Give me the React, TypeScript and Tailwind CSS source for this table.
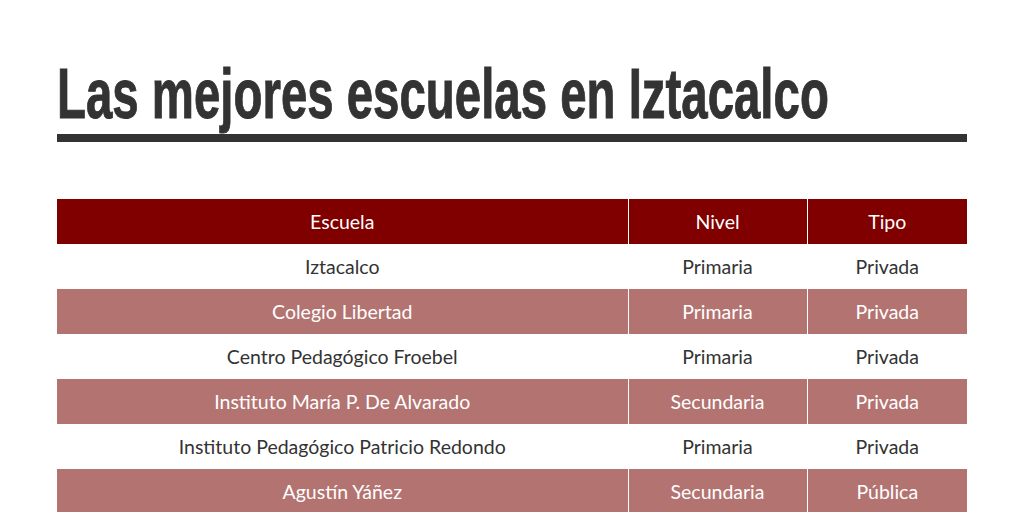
const rows = [
  { escuela: "Iztacalco", nivel: "Primaria", tipo: "Privada" },
  { escuela: "Colegio Libertad", nivel: "Primaria", tipo: "Privada" },
  { escuela: "Centro Pedagógico Froebel", nivel: "Primaria", tipo: "Privada" },
  { escuela: "Instituto María P. De Alvarado", nivel: "Secundaria", tipo: "Privada" },
  { escuela: "Instituto Pedagógico Patricio Redondo", nivel: "Primaria", tipo: "Privada" },
  { escuela: "Agustín Yáñez", nivel: "Secundaria", tipo: "Pública" },
]

export default function App() {
  return (
    <div className="w-[1024px] h-[512px] overflow-hidden bg-white px-[57px] pt-[54px]">
      {/* narrow bold title: no condensed face installed, so squeeze a regular one */}
      <h1
        className="text-[70px] leading-[80px] font-bold text-[#333333] whitespace-nowrap border-b-[8px] border-[#333333]"
        style={{ fontFamily: '"Liberation Sans", Arial, sans-serif' }}
      >
        <span className="inline-block origin-left scale-x-[0.677] [-webkit-text-stroke:1px_#333333]">
          Las mejores escuelas en Iztacalco
        </span>
      </h1>

      <table
        className="mt-[57px] w-[910px] border-collapse text-[19.5px]"
        style={{ fontFamily: 'Lato, "Noto Sans", sans-serif' }}
      >
        <thead>
          <tr className="bg-[#800000] text-white h-[45px]">
            <th className="w-[571px] font-normal text-center border-r border-white">Escuela</th>
            <th className="w-[179px] font-normal text-center border-r border-white">Nivel</th>
            <th className="font-normal text-center">Tipo</th>
          </tr>
        </thead>
        <tbody>
          {rows.map((r, i) => {
            const odd = i % 2 === 1
            return (
              <tr
                key={i}
                className={odd ? "bg-[#b37471] text-white h-[45px]" : "bg-white text-[#333333] h-[45px]"}
              >
                <td className="text-center border-r border-white">{r.escuela}</td>
                <td className="text-center border-r border-white">{r.nivel}</td>
                <td className="text-center">{r.tipo}</td>
              </tr>
            )
          })}
        </tbody>
      </table>
    </div>
  )
}
